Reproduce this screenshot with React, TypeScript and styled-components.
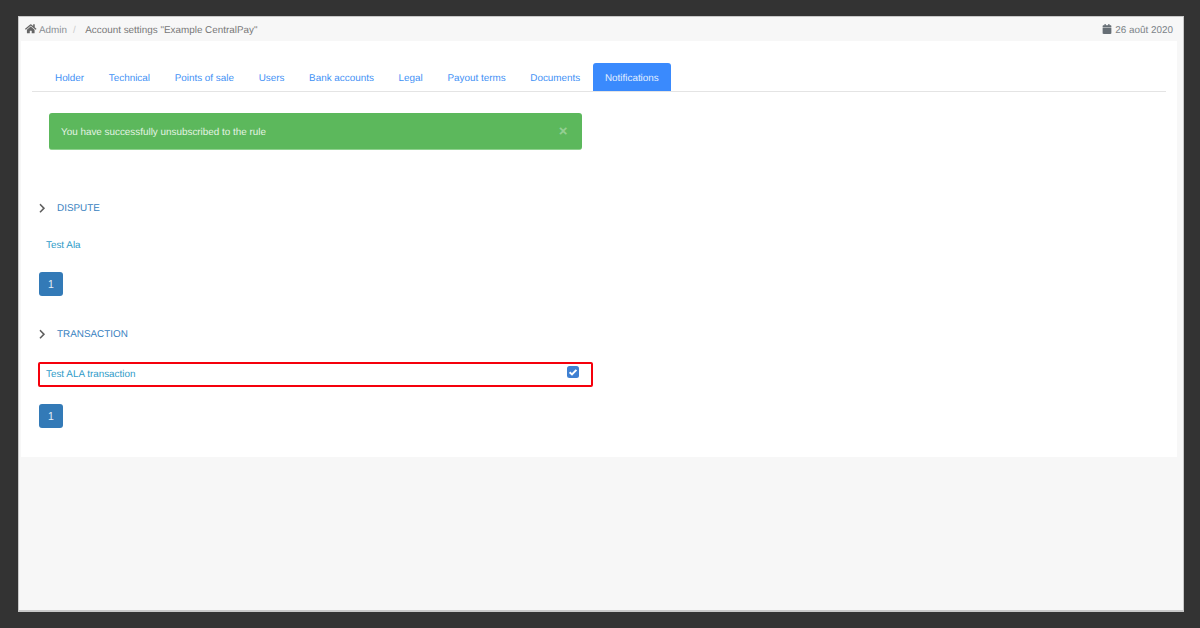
import styled, { createGlobalStyle } from "styled-components";
import { FaCalendar, FaChevronRight, FaHome } from "react-icons/fa";

const tabs = ["Holder", "Technical", "Points of sale", "Users", "Bank accounts", "Legal", "Payout terms", "Documents", "Notifications"];

const Global = createGlobalStyle`
  html, body {
    margin: 0;
    height: 628px;
    overflow: hidden;
    background: #333333;
    font-family: "Liberation Sans", Arial, sans-serif;
    font-size: 9.9px;
    text-rendering: geometricPrecision;
  }
`;

const Frame = styled.div`
  box-sizing: border-box;
  width: 1166px;
  height: 596px;
  margin: 16px 0 0 18px;
  background: #f7f7f7;
  border: 1px solid #c8c8c8;
  border-bottom-width: 2px;
`;

const Breadcrumb = styled.div`
  box-sizing: border-box;
  height: 24px;
  padding: 2px 10px 0 6px;
  display: flex;
  align-items: center;
  color: #777;
`;

const Crumb = styled.a`
  display: flex;
  align-items: center;
  gap: 2.5px;
  color: #8a8f94;
  svg { color: #666; font-size: 11.5px; margin-top: -2px; }
`;

const Slash = styled.span`
  color: #ccc;
  margin: 0 9.5px 0 6px;
`;

const DateBox = styled.div`
  margin-left: auto;
  display: flex;
  align-items: center;
  gap: 3px;
  color: #7d8489;
  svg { color: #666e75; font-size: 10px; margin-top: -2px; }
`;

const Content = styled.div`
  box-sizing: border-box;
  width: 1156px;
  height: 416px;
  margin-left: 2px;
  padding: 22px 11px 0;
  background: #fff;
`;

const Tabs = styled.ul`
  list-style: none;
  margin: 0;
  padding: 0 0 0 11px;
  display: flex;
  gap: 0.7px;
  height: 28px;
  border-bottom: 1px solid #e4e4e4;
`;

const Tab = styled.li<{ $active?: boolean }>`
  box-sizing: border-box;
  height: 28px;
  padding: 2px 12px 0;
  display: flex;
  align-items: center;
  border-radius: 3px 3px 0 0;
  color: ${(p) => (p.$active ? "#e3efff" : "#3f91f5")};
  background: ${(p) => (p.$active ? "#3a8afd" : "transparent")};
`;

const Alert = styled.div`
  box-sizing: border-box;
  width: 532.5px;
  height: 37px;
  margin: 21px 0 0 17px;
  padding: 2px 14px 0 12px;
  display: flex;
  align-items: center;
  justify-content: space-between;
  background: #5cb85c;
  border-radius: 3px;
  border-bottom: 1px solid #8fd18f;
  color: #e4f3e4;
`;

const Close = styled.span`
  color: #93cf93;
  font-size: 15px;
  font-weight: bold;
  line-height: 1;
  margin-top: -2px;
`;

const Section = styled.section<{ $top: number }>`
  margin-top: ${(p) => p.$top}px;
`;

const SectionHead = styled.div`
  box-sizing: border-box;
  display: flex;
  align-items: center;
  height: 14px;
  padding: 2px 0 0 5px;
  color: #3a82bf;
  svg { color: #5f5f5f; font-size: 10.5px; margin: 0 9.5px 0 0; }
`;

const RuleLink = styled.a`
  color: #2f9bc8;
`;

const PlainRule = styled.div`
  box-sizing: border-box;
  margin: 23px 0 0 14px;
  height: 14px;
  padding-top: 2px;
  display: flex;
  align-items: center;
`;

const MarkedRule = styled.div`
  box-sizing: border-box;
  width: 555px;
  height: 25px;
  margin: 22px 0 0 6px;
  padding: 0 12px 1px 6px;
  display: flex;
  align-items: center;
  justify-content: space-between;
  border: 2px solid #f5000c;
  border-radius: 2px;
  svg { margin-top: -5px; }
`;

const PageButton = styled.button<{ $top: number }>`
  display: block;
  width: 24px;
  height: 24px;
  margin: ${(p) => p.$top}px 0 0 7px;
  padding: 0;
  border: 0;
  border-radius: 3px;
  background: #337ab7;
  color: #e6eff7;
  font: inherit;
  font-size: 10.5px;
`;

const CheckedBox = () => (
  <svg width="12" height="12" viewBox="0 0 12 12">
    <rect width="12" height="12" rx="2.5" fill="#3f80d2" />
    <path d="M2.6 6.2 5 8.4 9.4 3.9" fill="none" stroke="#fff" strokeWidth="2" />
  </svg>
);

export default function App() {
  return (
    <>
      <Global />
      <Frame>
        <Breadcrumb>
          <Crumb>
            <FaHome />
            Admin
          </Crumb>
          <Slash>/</Slash>
          <span>Account settings "Example CentralPay"</span>
          <DateBox>
            <FaCalendar />
            26 août 2020
          </DateBox>
        </Breadcrumb>
        <Content>
          <Tabs>
            {tabs.map((t) => (
              <Tab key={t} $active={t === "Notifications"}>
                {t}
              </Tab>
            ))}
          </Tabs>
          <Alert>
            You have successfully unsubscribed to the rule
            <Close>×</Close>
          </Alert>
          <Section $top={50}>
            <SectionHead>
              <FaChevronRight />
              DISPUTE
            </SectionHead>
            <PlainRule>
              <RuleLink>Test Ala</RuleLink>
            </PlainRule>
            <PageButton $top={21}>1</PageButton>
          </Section>
          <Section $top={30}>
            <SectionHead>
              <FaChevronRight />
              TRANSACTION
            </SectionHead>
            <MarkedRule>
              <RuleLink>Test ALA transaction</RuleLink>
              <CheckedBox />
            </MarkedRule>
            <PageButton $top={17}>1</PageButton>
          </Section>
        </Content>
      </Frame>
    </>
  );
}
